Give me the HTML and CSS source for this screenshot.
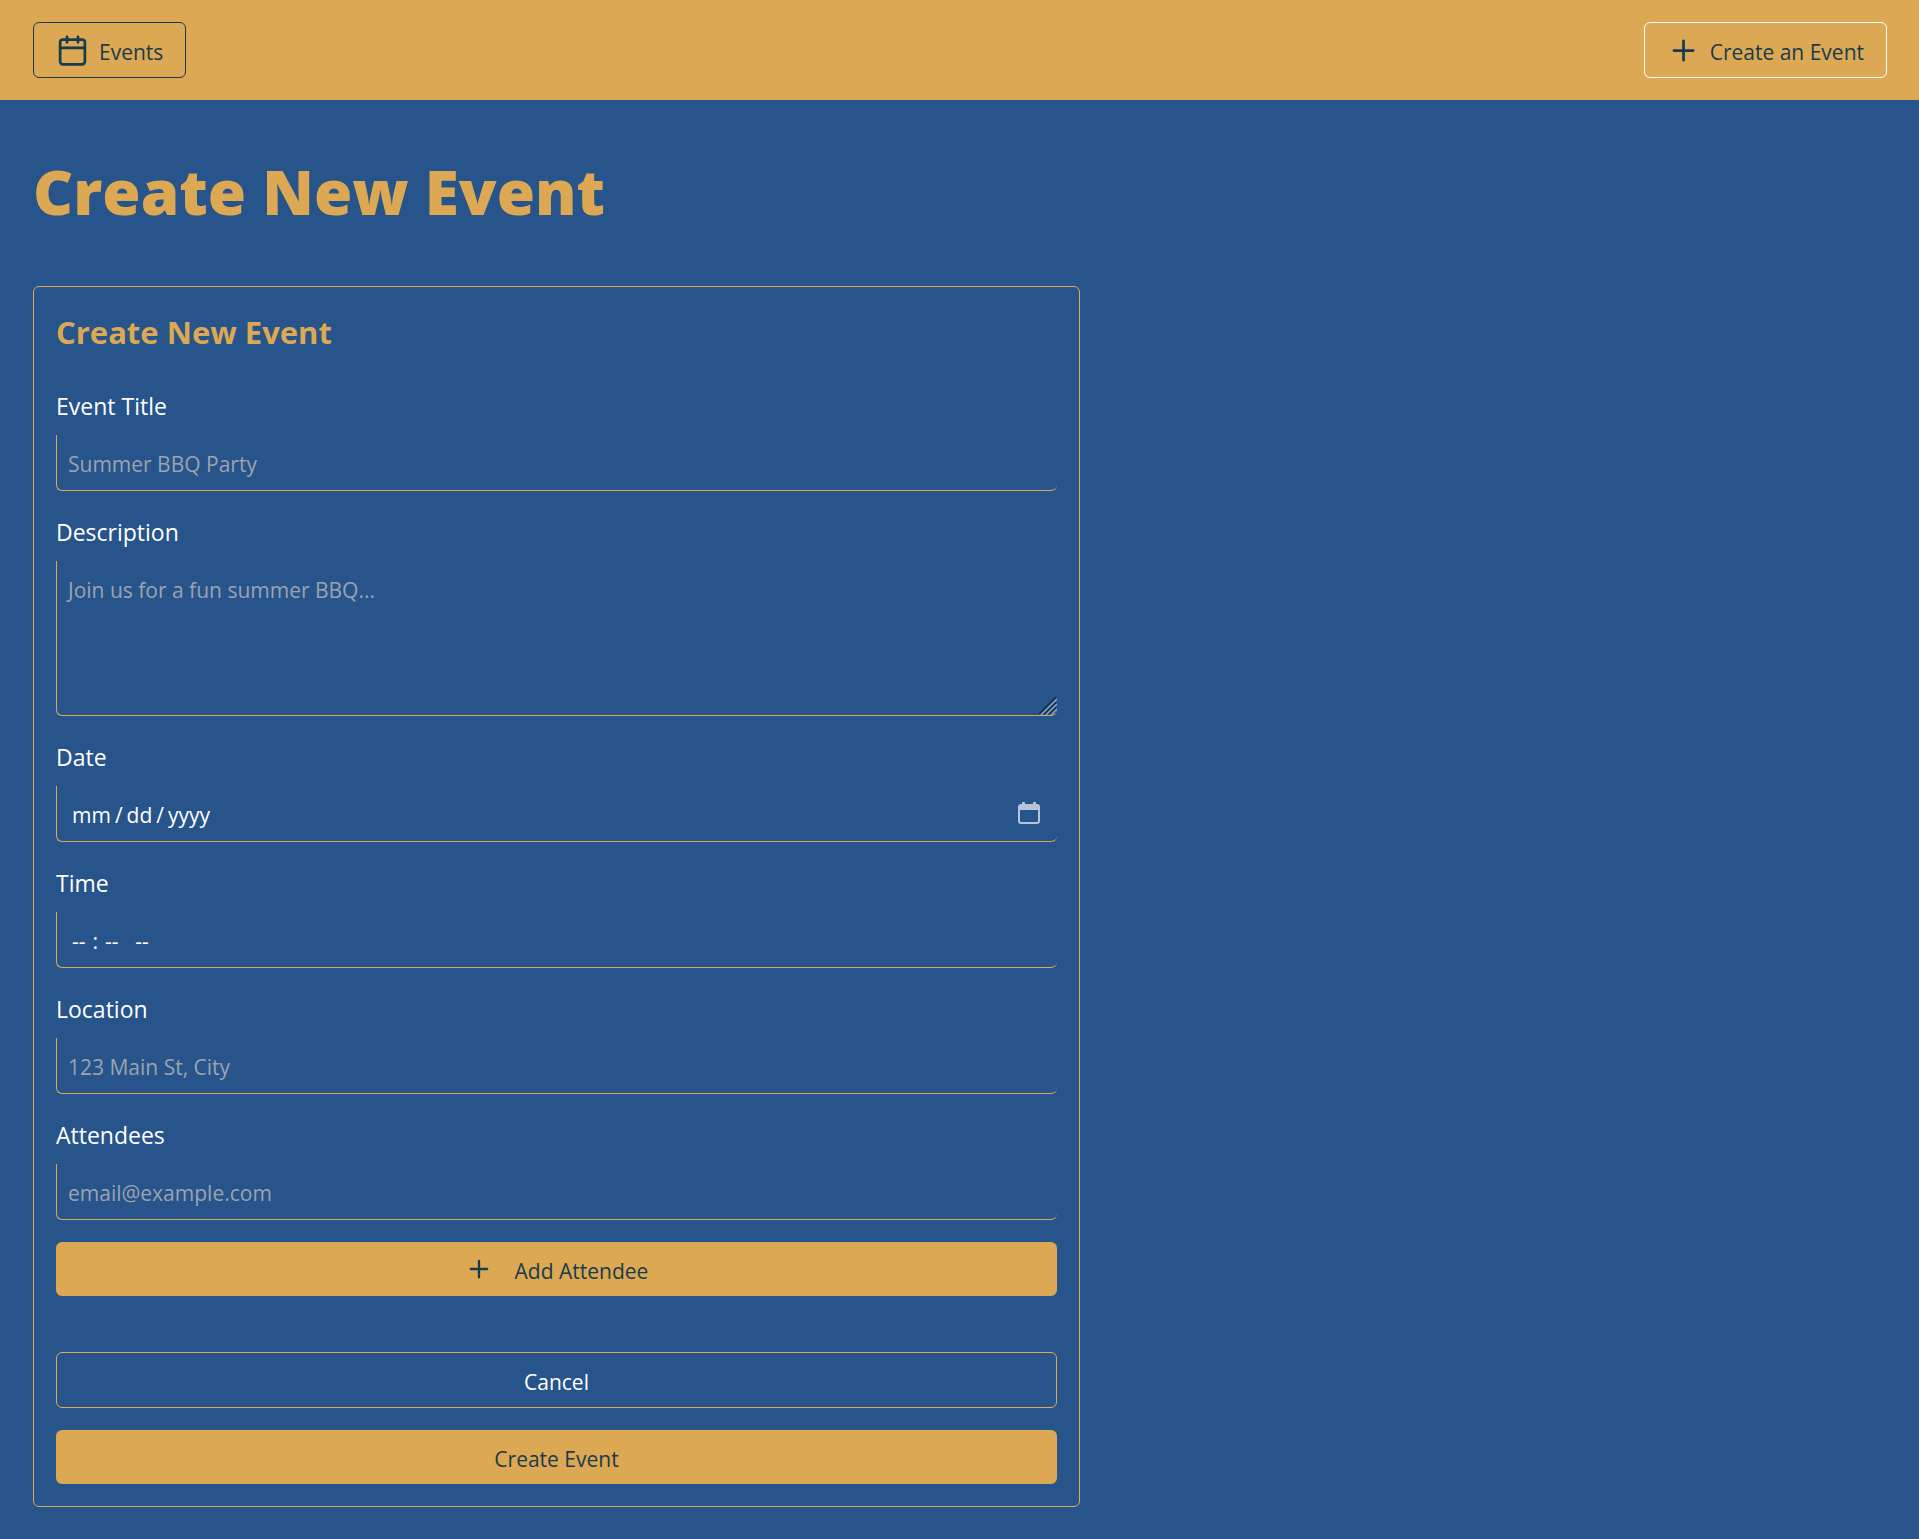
FILE: index.html
```html
<!DOCTYPE html>
<html lang="en-US">
<head>
  <meta charset="utf-8">
  <meta name="viewport" content="width=device-width, initial-scale=1">
  <title>Create New Event</title>
  <link rel="stylesheet" href="styles.css">
</head>
<body>
  <header class="site-header">
    <nav class="site-nav">
      <a class="nav-link" href="#events">
        <svg class="icon" viewBox="0 0 24 24" aria-hidden="true"><path d="M8 2v4M16 2v4M3 10h18"/><rect x="3" y="4" width="18" height="18" rx="2"/></svg>
        <span class="control-text">Events</span>
      </a>
      <a class="nav-link nav-link-light" href="#create">
        <svg class="icon" viewBox="0 0 24 24" aria-hidden="true"><path d="M5 12h14M12 5v14"/></svg>
        <span class="control-text">Create an Event</span>
      </a>
    </nav>
  </header>
  <main class="page">
    <h1 class="page-title">Create New Event</h1>
    <form class="card">
      <h2 class="card-title">Create New Event</h2>
      <div class="field">
        <label class="field-label" for="title">Event Title</label>
        <input class="field-input" id="title" type="text" placeholder="Summer BBQ Party">
      </div>
      <div class="field">
        <label class="field-label" for="description">Description</label>
        <textarea class="field-input field-textarea" id="description" placeholder="Join us for a fun summer BBQ..."></textarea>
      </div>
      <div class="field">
        <label class="field-label" for="date">Date</label>
        <input class="field-input" id="date" type="date">
      </div>
      <div class="field">
        <label class="field-label" for="time">Time</label>
        <input class="field-input field-time" id="time" type="time">
      </div>
      <div class="field">
        <label class="field-label" for="location">Location</label>
        <input class="field-input" id="location" type="text" placeholder="123 Main St, City">
      </div>
      <div class="field">
        <label class="field-label" for="attendee">Attendees</label>
        <input class="field-input" id="attendee" type="email" placeholder="email@example.com">
      </div>
      <button class="button button-primary button-icon" type="button">
        <svg class="icon icon-small" viewBox="0 0 24 24" aria-hidden="true"><path d="M5 12h14M12 5v14"/></svg>
        <span class="control-text">Add Attendee</span>
      </button>
      <div class="actions">
        <button class="button button-outline" type="button"><span class="control-text">Cancel</span></button>
        <button class="button button-primary" type="submit"><span class="control-text">Create Event</span></button>
      </div>
    </form>
  </main>
</body>
</html>
```
FILE: styles.css
```css
:root {
  --blue: #27548a;
  --gold: #dda853;
  --navy: #183b4e;
  --muted: #9ca3af;
}

* {
  box-sizing: border-box;
}

body {
  margin: 0;
  min-height: 100vh;
  background: var(--blue);
  color: #fff;
  font: 21px/32px "Open Sans", "Noto Sans", sans-serif;
}

.site-header {
  padding: 22px 32px 22px 33px;
  background: var(--gold);
}

.site-nav {
  display: flex;
  justify-content: space-between;
}

.nav-link {
  display: flex;
  align-items: center;
  gap: 10px;
  height: 56px;
  padding: 0 22px;
  border: 1px solid var(--navy);
  border-radius: 6px;
  color: var(--navy);
  text-decoration: none;
}

.nav-link-light {
  border-color: #fff;
}

.control-text {
  padding-top: 3px;
}

.icon {
  width: 33px;
  height: 33px;
  fill: none;
  stroke: currentColor;
  stroke-width: 2;
  stroke-linecap: round;
  stroke-linejoin: round;
}

.icon-small {
  width: 28px;
  height: 28px;
}

.page {
  padding: 55px 33px 33px;
}

.page-title {
  margin: 0 0 59px;
  color: var(--gold);
  font-size: 62px;
  font-weight: 800;
  line-height: 72px;
}

.card {
  display: flex;
  flex-direction: column;
  gap: 22px;
  max-width: 1047px;
  padding: 22px;
  border: 1px solid var(--gold);
  border-radius: 6px;
}

.card-title {
  margin: 0 0 10px;
  color: var(--gold);
  font-size: 31px;
  font-weight: 700;
  line-height: 46px;
}

.field {
  display: flex;
  flex-direction: column;
}

.field-label {
  padding-bottom: 10px;
  font-size: 23px;
  line-height: 38px;
}

.field-input {
  width: 100%;
  height: 56px;
  margin: 0;
  padding: 13px 11px 10px;
  border: 0 solid var(--gold);
  border-width: 0 0 1px 1px;
  border-radius: 0 0 6px 6px;
  outline: 0;
  background: transparent;
  color: #fff;
  font: inherit;
}

.field-input::placeholder {
  color: var(--muted);
  opacity: 1;
}

.field-textarea {
  display: block;
  height: 155px;
  resize: vertical;
  background: url("data:image/svg+xml,%3Csvg xmlns='http://www.w3.org/2000/svg' viewBox='0 0 18 18'%3E%3Cg stroke='%23112a45' stroke-width='1.3'%3E%3Cpath d='M0 17L17 0M5 17L17 5M10 17L17 10'/%3E%3C/g%3E%3Cg stroke='%2393a9c4' stroke-width='1.3'%3E%3Cpath d='M2 18L18 2M7 18L18 7M12 18L18 12'/%3E%3C/g%3E%3C/svg%3E") right bottom / 18px 18px no-repeat;
}

.field-textarea::-webkit-resizer {
  background: transparent;
}

.field-input::-webkit-datetime-edit {
  padding: 0 3px;
}

.field-input::-webkit-datetime-edit-text {
  padding: 0 3px;
}

.field-time::-webkit-datetime-edit-text {
  padding: 0 6px;
}

.field-input::-webkit-calendar-picker-indicator {
  width: 22px;
  height: 22px;
  margin: 0 6px 5px 0;
  padding: 0;
  background: url("data:image/svg+xml,%3Csvg xmlns='http://www.w3.org/2000/svg' viewBox='0 0 22 22'%3E%3Cpath fill='%23b5c4d8' fill-rule='evenodd' d='M4 2V1a1 1 0 0 1 3 0v1h8V1a1 1 0 0 1 3 0v1h1a3 3 0 0 1 3 3v14a3 3 0 0 1-3 3H3a3 3 0 0 1-3-3V5a3 3 0 0 1 3-3zM2 8v11q0 1 1 1h16q1 0 1-1V8z'/%3E%3C/svg%3E") center / contain no-repeat;
}

.field-time::-webkit-calendar-picker-indicator {
  display: none;
}

.button {
  display: flex;
  align-items: center;
  justify-content: center;
  width: 100%;
  height: 54px;
  padding: 0 22px;
  border: 0;
  border-radius: 6px;
  font: inherit;
}

.button-primary {
  background: var(--gold);
  color: var(--navy);
}

.button-outline {
  height: 56px;
  border: 1px solid var(--gold);
  background: transparent;
  color: #fff;
}

.button-icon {
  gap: 22px;
}

.actions {
  display: flex;
  flex-direction: column;
  gap: 22px;
  margin-top: 34px;
}
```
